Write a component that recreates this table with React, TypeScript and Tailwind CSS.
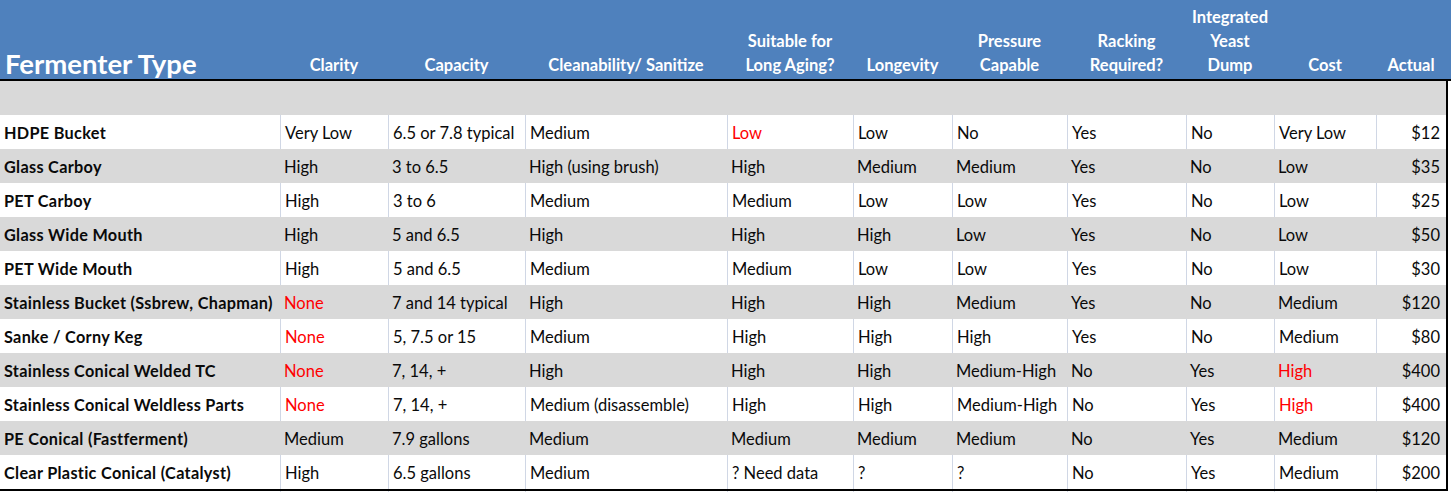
const COLS = "grid grid-cols-[280px_108px_137px_202px_126px_99px_115px_119px_88px_102px_70px]";

type Cell = { text: string; red?: boolean };

const headers: string[][] = [
  ["Clarity"],
  ["Capacity"],
  ["Cleanability/ Sanitize"],
  ["Suitable for", "Long Aging?"],
  ["Longevity"],
  ["Pressure", "Capable"],
  ["Racking", "Required?"],
  ["Integrated", "Yeast", "Dump"],
  ["Cost"],
  ["Actual"],
];

const r = (text: string): Cell => ({ text, red: true });
const c = (text: string): Cell => ({ text });

const rows: Cell[][] = [
  [c("HDPE Bucket"), c("Very Low"), c("6.5 or 7.8 typical"), c("Medium"), r("Low"), c("Low"), c("No"), c("Yes"), c("No"), c("Very Low"), c("$12")],
  [c("Glass Carboy"), c("High"), c("3 to 6.5"), c("High (using brush)"), c("High"), c("Medium"), c("Medium"), c("Yes"), c("No"), c("Low"), c("$35")],
  [c("PET Carboy"), c("High"), c("3 to 6"), c("Medium"), c("Medium"), c("Low"), c("Low"), c("Yes"), c("No"), c("Low"), c("$25")],
  [c("Glass Wide Mouth"), c("High"), c("5 and 6.5"), c("High"), c("High"), c("High"), c("Low"), c("Yes"), c("No"), c("Low"), c("$50")],
  [c("PET Wide Mouth"), c("High"), c("5 and 6.5"), c("Medium"), c("Medium"), c("Low"), c("Low"), c("Yes"), c("No"), c("Low"), c("$30")],
  [c("Stainless Bucket (Ssbrew, Chapman)"), r("None"), c("7 and 14 typical"), c("High"), c("High"), c("High"), c("Medium"), c("Yes"), c("No"), c("Medium"), c("$120")],
  [c("Sanke / Corny Keg"), r("None"), c("5, 7.5 or 15"), c("Medium"), c("High"), c("High"), c("High"), c("Yes"), c("No"), c("Medium"), c("$80")],
  [c("Stainless Conical Welded TC"), r("None"), c("7, 14, +"), c("High"), c("High"), c("High"), c("Medium-High"), c("No"), c("Yes"), r("High"), c("$400")],
  [c("Stainless Conical Weldless Parts"), r("None"), c("7, 14, +"), c("Medium (disassemble)"), c("High"), c("High"), c("Medium-High"), c("No"), c("Yes"), r("High"), c("$400")],
  [c("PE Conical (Fastferment)"), c("Medium"), c("7.9 gallons"), c("Medium"), c("Medium"), c("Medium"), c("Medium"), c("No"), c("Yes"), c("Medium"), c("$120")],
  [c("Clear Plastic Conical (Catalyst)"), c("High"), c("6.5 gallons"), c("Medium"), c("? Need data"), c("?"), c("?"), c("No"), c("Yes"), c("Medium"), c("$200")],
];

function DataRow({ cells, shaded }: { cells: Cell[]; shaded: boolean }) {
  return (
    <div className={`${COLS} h-[34px] ${shaded ? "bg-[#D9D9D9]" : "bg-white"}`}>
      {cells.map((cell, i) => {
        const first = i === 0;
        const last = i === cells.length - 1;
        return (
          <div
            key={i}
            className={`flex items-center whitespace-nowrap pl-[4px] ${
              first ? "pt-[2px] text-[16.25px] font-bold tracking-[0.3px]" : "pt-[2px]"
            } ${last ? "justify-end pr-[6px]" : ""} ${!first && !shaded ? "border-l border-[#D0D7E5]" : ""} ${
              cell.red ? "text-[#FF0000]" : "text-[#0a0a0a]"
            }`}
          >
            {cell.text}
          </div>
        );
      })}
    </div>
  );
}

export default function App() {
  return (
    <div className="h-[492px] w-[1451px] overflow-hidden bg-white font-['Lato',sans-serif] text-[16.5px]">
      <div className="h-[79px] bg-[#4F81BD] text-white">
        <div className={`${COLS} h-full`}>
          <div className="flex items-end pb-[2px] pl-[5px] text-[27.5px] font-bold leading-none">Fermenter Type</div>
          {headers.map((lines, i) => (
            <div key={i} className="flex flex-col items-center justify-end pb-[2px] text-[16.5px] font-bold leading-[24px]">
              {lines.map((l) => (
                <span key={l} className="whitespace-nowrap">
                  {l}
                </span>
              ))}
            </div>
          ))}
        </div>
      </div>
      <div className="h-[2px] w-full bg-black" />
      <div className="w-[1448px] border-b-2 border-r-2 border-black">
        <div className="h-[34px] bg-[#D9D9D9]" />
        {rows.map((row, i) => (
          <DataRow key={i} cells={row} shaded={i % 2 === 1} />
        ))}
      </div>
      <div className={`${COLS} h-[10px]`}>
        {Array.from({ length: 11 }).map((_, i) => (
          <div key={i} className={i === 0 ? "" : "border-l border-[#D0D7E5]"} />
        ))}
      </div>
    </div>
  );
}
